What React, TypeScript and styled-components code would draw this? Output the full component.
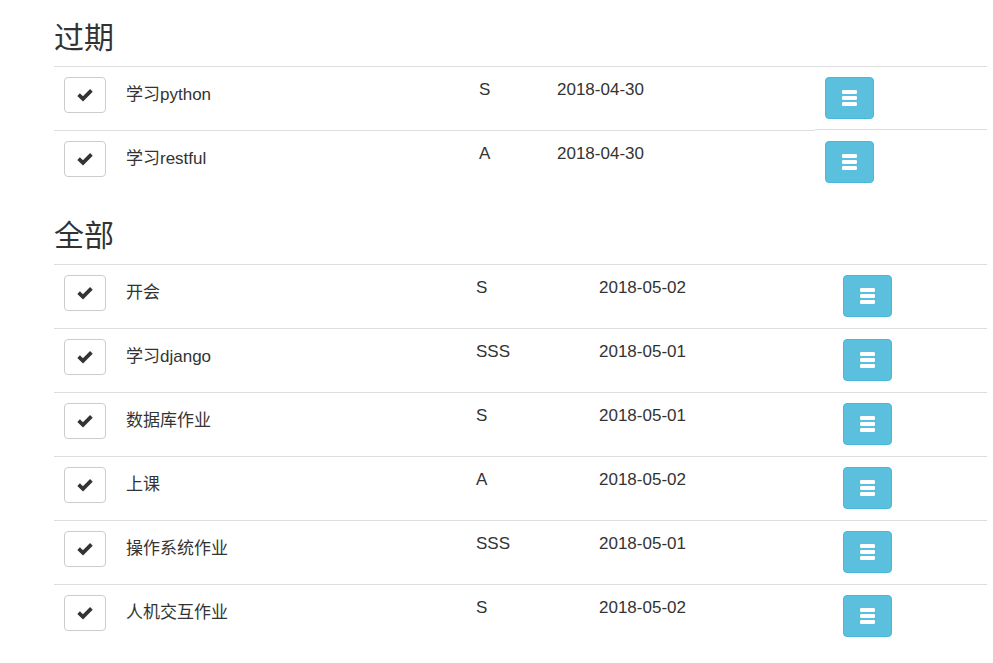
import React from "react";
import styled, { createGlobalStyle } from "styled-components";

const Global = createGlobalStyle`
  html, body { margin: 0; padding: 0; background: #fff; }
  body {
    font-family: "Liberation Sans", "Noto Sans CJK SC", sans-serif;
    color: #333;
  }
`;

const Page = styled.main`
  width: 933px;
  margin-left: 54px;
  padding-top: 21px;
`;

const Section = styled.section<{ $first?: boolean }>`
  margin-top: ${(p) => (p.$first ? "0" : "25px")};
`;

const Heading = styled.h2`
  margin: 0 0 12px;
  font-size: 30px;
  line-height: 33px;
  font-weight: 400;
  color: #333;
`;

const Row = styled.div<{ $cols: string }>`
  display: grid;
  grid-template-columns: ${(p) => p.$cols};
  height: 64px;
  align-items: stretch;
`;

const Cell = styled.div<{ $pad?: number; $lift?: boolean }>`
  box-sizing: border-box;
  border-top: 1px solid #ddd;
  padding: ${(p) => (p.$pad ?? 10) + (p.$lift ? 1 : 0)}px 0 0 10px;
  margin-top: ${(p) => (p.$lift ? "-1px" : "0")};
  font-size: 17px;
  line-height: 24px;
  color: #333;
  white-space: nowrap;
`;

const CheckButton = styled.button`
  box-sizing: border-box;
  width: 42px;
  height: 36px;
  padding: 0;
  display: flex;
  align-items: center;
  justify-content: center;
  background: #fff;
  border: 1px solid #ccc;
  border-radius: 4px;
  cursor: pointer;
`;

const MenuButton = styled.button`
  box-sizing: border-box;
  width: 49px;
  height: 42px;
  padding: 0;
  display: flex;
  align-items: center;
  justify-content: center;
  background: #5bc0de;
  border: 1px solid #46b8da;
  border-radius: 4px;
  cursor: pointer;
`;

const CheckIcon = () => (
  <svg width="16" height="13" viewBox="0 0 16 13" aria-hidden="true">
    <path d="M1.6 5.6 L6 9.8 L14.4 1.4" fill="none" stroke="#333" strokeWidth="3.7" strokeLinejoin="miter" />
  </svg>
);

const MenuIcon = () => (
  <svg width="15" height="16" viewBox="0 0 15 16" aria-hidden="true">
    <rect x="0" y="0" width="15" height="4" rx="1.2" fill="#fff" />
    <rect x="0" y="6" width="15" height="4" rx="1.2" fill="#fff" />
    <rect x="0" y="12" width="15" height="4" rx="1.2" fill="#fff" />
  </svg>
);

type Task = { name: string; level: string; date: string };

const overdue: Task[] = [
  { name: "学习python", level: "S", date: "2018-04-30" },
  { name: "学习restful", level: "A", date: "2018-04-30" },
];

const all: Task[] = [
  { name: "开会", level: "S", date: "2018-05-02" },
  { name: "学习django", level: "SSS", date: "2018-05-01" },
  { name: "数据库作业", level: "S", date: "2018-05-01" },
  { name: "上课", level: "A", date: "2018-05-02" },
  { name: "操作系统作业", level: "SSS", date: "2018-05-01" },
  { name: "人机交互作业", level: "S", date: "2018-05-02" },
];

const TaskTable = ({ tasks, cols, liftSecondAction }: { tasks: Task[]; cols: string; liftSecondAction?: boolean }) => (
  <div>
    {tasks.map((t, i) => (
      <Row key={t.name} $cols={cols}>
        <Cell>
          <CheckButton type="button">
            <CheckIcon />
          </CheckButton>
        </Cell>
        <Cell $pad={16}>{t.name}</Cell>
        <Cell $pad={11}>{t.level}</Cell>
        <Cell $pad={11}>{t.date}</Cell>
        <Cell $lift={liftSecondAction && i === 1}>
          <MenuButton type="button">
            <MenuIcon />
          </MenuButton>
        </Cell>
      </Row>
    ))}
  </div>
);

export default function App() {
  return (
    <>
      <Global />
      <Page>
        <Section $first>
          <Heading>过期</Heading>
          <TaskTable tasks={overdue} cols="62px 353px 78px 268px 1fr" liftSecondAction />
        </Section>
        <Section>
          <Heading>全部</Heading>
          <TaskTable tasks={all} cols="62px 350px 123px 244px 1fr" />
        </Section>
      </Page>
    </>
  );
}
